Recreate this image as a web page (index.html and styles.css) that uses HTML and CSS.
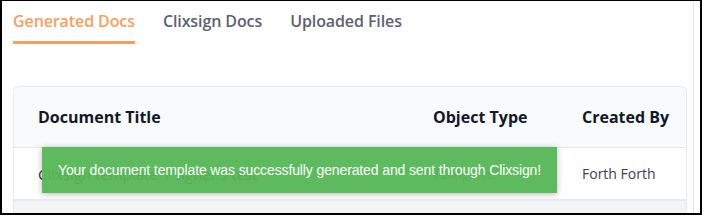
FILE: index.html
```html
<!DOCTYPE html>
<html>
<head>
<meta charset="utf-8">
<link rel="stylesheet" href="styles.css">
</head>
<body>
<div class="frame">
  <div class="page">
    <nav class="tabs">
      <div class="tab active">Generated Docs</div>
      <div class="tab">Clixsign Docs</div>
      <div class="tab">Uploaded Files</div>
    </nav>
    <div class="card">
      <div class="row head">
        <div class="cell">Document Title</div>
        <div class="cell">Object Type</div>
        <div class="cell">Created By</div>
      </div>
      <div class="row body">
        <div class="cell title">Clixsign template 1 signer's test</div>
        <div class="cell muted">Template</div>
        <div class="cell">Forth Forth</div>
      </div>
      <div class="row alt"></div>
    </div>
  </div>
  <div class="toast">Your document template was successfully generated and sent through Clixsign!</div>
</div>
</body>
</html>
```
FILE: styles.css
```css
html, body { margin: 0; padding: 0; background: #fff; }
.frame {
  position: relative;
  width: 702px;
  height: 215px;
  box-sizing: border-box;
  border: 2px solid #000;
  border-top-width: 1px;
  overflow: hidden;
  font-family: "Open Sans", "Liberation Sans", sans-serif;
}
.page {
  width: 692px;
  height: 100%;
  box-sizing: border-box;
  border-right: 1px solid #e4e4e4;
  padding: 9px 0 0 11px;
}
.tabs { display: flex; gap: 28px; }
.tab {
  font-size: 16px;
  font-weight: 600;
  line-height: 22px;
  letter-spacing: -0.1px;
  color: #5b6270;
  padding-bottom: 9px;
  border-bottom: 3px solid transparent;
}
.tab.active { color: #f99e5c; border-bottom-color: #f99e5c; }
.card {
  margin-top: 42px;
  width: 672px;
  border: 1px solid #e5e7eb;
  border-bottom: none;
  border-radius: 6px 6px 0 0;
  overflow: hidden;
}
.row {
  display: grid;
  grid-template-columns: 395px 149px 1fr;
  padding-left: 24px;
  align-items: center;
}
.head {
  height: 60px;
  background: #f9fafb;
  border-bottom: 1px solid #e5e7eb;
  font-size: 16px;
  font-weight: 700;
  color: #111827;
}
.body {
  height: 51px;
  border-bottom: 2px solid #e8eaf0;
  font-size: 14px;
  color: #374151;
}
.title { color: #2d3a4f; font-size: 15px; }
.muted { color: #6b7280; }
.alt { height: 20px; background: #f3f4f6; }
.toast {
  position: absolute;
  left: 40px;
  top: 146px;
  width: 515px;
  height: 46px;
  box-sizing: border-box;
  padding: 0 16px;
  display: flex;
  align-items: center;
  white-space: nowrap;
  letter-spacing: -0.12px;
  background: #55b655;
  opacity: 0.94;
  color: #fff;
  font-family: "Liberation Sans", Arial, sans-serif;
  font-size: 14px;
  box-shadow: 0 1px 6px rgba(0, 0, 0, 0.3);
}
```
